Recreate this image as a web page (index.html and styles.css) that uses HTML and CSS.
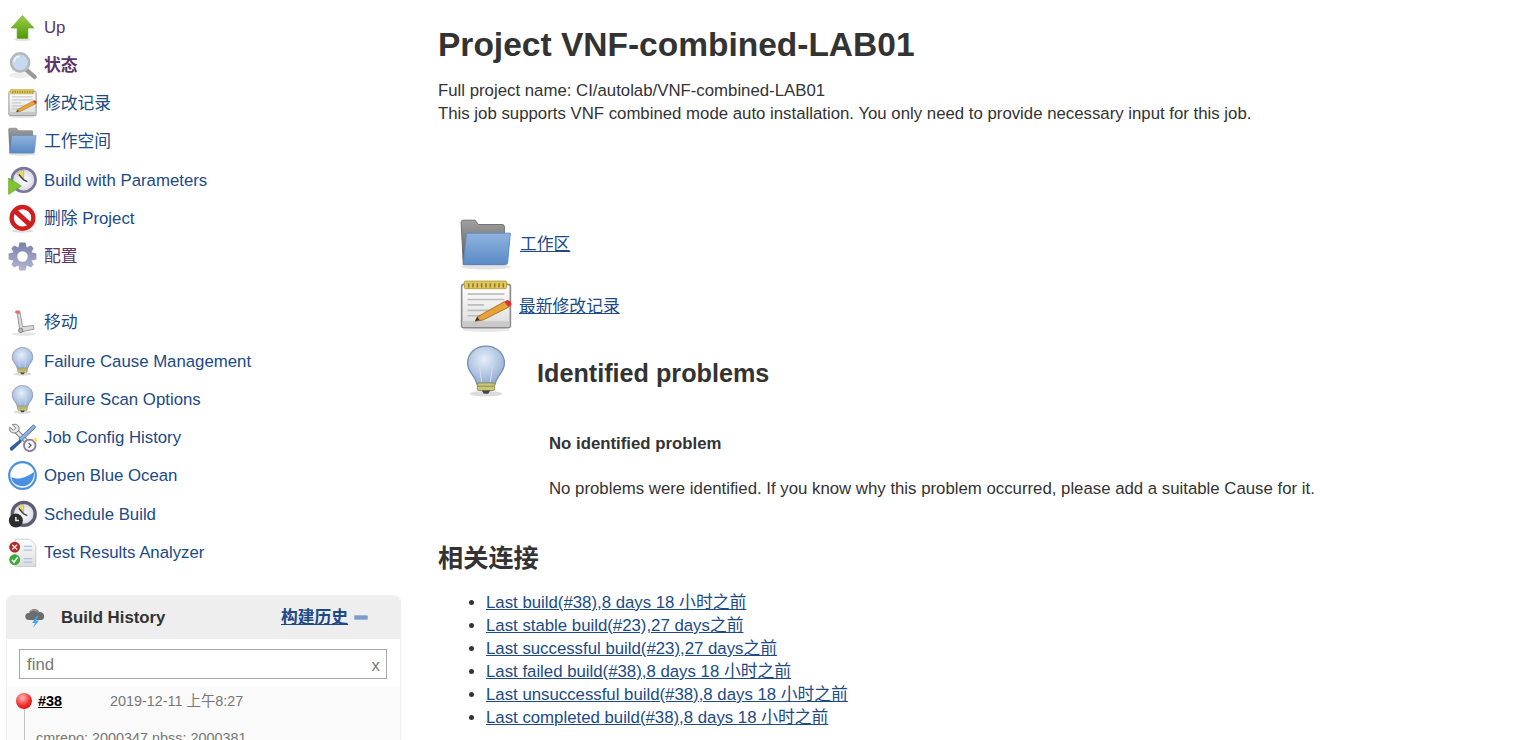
FILE: index.html
```html
<!DOCTYPE html>
<html lang="zh-CN">
<head>
  <meta charset="UTF-8">
  <meta name="viewport" content="width=device-width, initial-scale=1.0">
  <title>VNF-combined-LAB01</title>
  <link rel="stylesheet" href="styles.css">
</head>
<body>
  <svg class="defs" width="0" height="0">
    <defs>
      <linearGradient id="gFolder" x1="0" y1="0" x2="0" y2="1"><stop offset="0" stop-color="#8fb3de"/><stop offset="1" stop-color="#5a8ac6"/></linearGradient>
      <linearGradient id="gTab" x1="0" y1="0" x2="0" y2="1"><stop offset="0" stop-color="#a0a0a0"/><stop offset="1" stop-color="#555"/></linearGradient>
      <linearGradient id="gArrow" x1="0" y1="0" x2="0" y2="1"><stop offset="0" stop-color="#9ad04a"/><stop offset="1" stop-color="#4e9a06"/></linearGradient>
      <linearGradient id="gPaper" x1="0" y1="0" x2="0" y2="1"><stop offset="0" stop-color="#fff"/><stop offset="1" stop-color="#dcdcdc"/></linearGradient>
      <linearGradient id="gGear" x1="0" y1="0" x2="0" y2="1"><stop offset="0" stop-color="#7b80ab"/><stop offset="1" stop-color="#b3b6d3"/></linearGradient>
      <radialGradient id="gBulb" cx=".45" cy=".35" r=".7"><stop offset="0" stop-color="#e6eef8"/><stop offset="1" stop-color="#8aa9d4"/></radialGradient>
      <radialGradient id="gClock" cx=".5" cy=".5" r=".6"><stop offset="0" stop-color="#fff"/><stop offset="1" stop-color="#cfcfe0"/></radialGradient>

      <symbol id="i-up" viewBox="0 0 24 24">
        <ellipse cx="12" cy="22" rx="7" ry="1.300" fill="#e2e2e2"/>
        <path d="M12 2 L21.500 12.500 H16.500 V21 H7.500 V12.500 H2.500 Z" fill="url(#gArrow)" stroke="#6aa524" stroke-width=".5"/>
      </symbol>
      <symbol id="i-search" viewBox="0 0 24 24">
        <ellipse cx="10" cy="20" rx="9" ry="2.500" fill="#eee"/>
        <path d="M14.500 15 L22 21.500" stroke="#9a9a9a" stroke-width="3.600" stroke-linecap="round"/>
        <circle cx="10" cy="9.500" r="7.500" fill="#c5d9f1" stroke="#b8b8b8" stroke-width="2.200"/>
        <path d="M5 9 A5 5 0 0 1 9.500 4.500" fill="none" stroke="#eef5fd" stroke-width="1.400"/>
      </symbol>
      <symbol id="i-notepad" viewBox="0 0 48 48">
        <ellipse cx="24" cy="46" rx="22" ry="2" fill="#e8e8e8"/>
        <rect x="1.500" y="4" width="45" height="40" rx="2" fill="url(#gPaper)" stroke="#8a8a8a" stroke-width="1.500"/>
        <rect x="2.300" y="38" width="43.400" height="5.300" fill="#c9c9c9"/>
        <rect x="4" y="1" width="39" height="7" rx="1" fill="#e0c860" stroke="#b09a30" stroke-width=".8"/>
        <path d="M8 3v4M12 3v4M16 3v4M20 3v4M24 3v4M28 3v4M32 3v4M36 3v4M40 3v4" stroke="#8f7a20" stroke-width="1.400"/>
        <path d="M7 13H41M7 18H41M7 23H22M7 28H28M7 33H22" stroke="#bdbdbd" stroke-width="1.500"/>
        <path d="M16 34 L41 20 L45 25 L21 37 L14 38 Z" fill="#e8a33a" stroke="#a06a10" stroke-width=".8"/>
        <path d="M41 20 L45 25 L47.500 23 Q47.500 19 43.500 18.500 Z" fill="#e03030"/>
        <path d="M14 38 L16 34 L18 37 Z" fill="#333"/>
      </symbol>
      <symbol id="i-folder" viewBox="0 0 48 48">
        <ellipse cx="24" cy="45" rx="23" ry="2.500" fill="#e2e2e2"/>
        <path d="M1 4 Q1 2 3 2 H14 L17 6 H39 Q41 6 41 8 V43 H3 Z" fill="url(#gTab)" stroke="#666" stroke-width=".8"/>
        <path d="M6 14 H46.500 L44 41 Q44 43 42 43 H3 Z" fill="url(#gFolder)" stroke="#5b86bd" stroke-width=".8"/>
      </symbol>
      <symbol id="i-build" viewBox="0 0 24 24">
        <circle cx="13" cy="11.500" r="9.800" fill="url(#gClock)" stroke="#77779a" stroke-width="2.200"/>
        <path d="M13 11.500 L7 6 A8 8 0 0 1 13 3.500 Z" fill="#e8d870" stroke="#999" stroke-width=".5"/>
        <path d="M13 11.500 L9 7M13 11.500 L16 13" stroke="#444" stroke-width="1.200"/>
        <path d="M0.500 10 L11 16.500 L0.500 23.500 Z" fill="#7fc62e" stroke="#5c9a1a" stroke-width=".5"/>
      </symbol>
      <symbol id="i-stop" viewBox="0 0 24 24">
        <ellipse cx="12" cy="22.300" rx="9" ry="1.400" fill="#ddd"/>
        <circle cx="12" cy="11.500" r="9" fill="#fff" stroke="#d01f1f" stroke-width="3.600"/>
        <path d="M5.500 5.500 L18.500 17.500" stroke="#d01f1f" stroke-width="4"/>
      </symbol>
      <symbol id="i-gear" viewBox="0 0 24 24">
        <g fill="url(#gGear)">
          <path d="M9.500 .5 H14.500 L15.500 4.500 L18.800 2.800 L21.200 5.200 L19.500 8.500 L23.500 9.500 V14.500 L19.500 15.500 L21.200 18.800 L18.800 21.200 L15.500 19.500 L14.500 23.500 H9.500 L8.500 19.500 L5.200 21.200 L2.800 18.800 L4.500 15.500 L.5 14.500 V9.500 L4.500 8.500 L2.800 5.200 L5.200 2.800 L8.500 4.500 Z"/>
        </g>
        <circle cx="12" cy="12" r="4.300" fill="#fff"/>
      </symbol>
      <symbol id="i-move" viewBox="0 0 24 24">
        <ellipse cx="13" cy="21.500" rx="10" ry="1.500" fill="#e6e6e6"/>
        <path d="M7.500 3.500 L10 3.500 L12 15.500 L21 14.500 L21.500 17.500 L10 20 Z" fill="#dcdcdc" stroke="#8a8a8a" stroke-width=".7"/>
        <path d="M5.500 3.500 Q7 1 10 2.500 L9.500 5 L7 4.500 Z" fill="#d9716a"/>
        <circle cx="10.500" cy="18.500" r="1.800" fill="#bbb" stroke="#666" stroke-width=".6"/>
      </symbol>
      <symbol id="i-bulb" viewBox="0 0 48 48">
        <ellipse cx="24" cy="45" rx="15" ry="2.500" fill="#dcdcdc"/>
        <path d="M24 1 C34 1 41 8 41 17 C41 25 34 28 32.500 36 H15.500 C14 28 7 25 7 17 C7 8 14 1 24 1 Z" fill="url(#gBulb)" stroke="#7f8fab" stroke-width="1.200"/>
        <path d="M20 34 L18 20 M28 34 L30 20" stroke="#d8dbe0" stroke-width="1"/>
        <rect x="16" y="35" width="16" height="7" rx="1.500" fill="#c9c677" stroke="#85834a" stroke-width=".8"/>
        <path d="M16.500 38 H31.500" stroke="#85834a" stroke-width=".8"/>
        <path d="M20 42 H28 L26 45 H22 Z" fill="#444"/>
      </symbol>
      <symbol id="i-tools" viewBox="0 0 24 24">
        <path d="M6 6 L18 18" stroke="#777" stroke-width="4"/>
        <path d="M6 6 L18 18" stroke="#eee" stroke-width="2.400"/>
        <path d="M1.500 3.500 L4.500 6 L6.500 4 L3.500 1.500 C7 0 10 2.500 9 6 L7 8 C3.500 9 .5 7 1.500 3.500 Z" fill="#e8e8e8" stroke="#777" stroke-width=".8"/>
        <path d="M21 1.500 L23 3.500 L11 15 L9 13 Z" fill="#8fb3de" stroke="#3d6aa3" stroke-width=".7"/>
        <path d="M10 13.500 L2 20 Q.5 22.500 3.500 23 L11.500 15.500 Z" fill="#2f5f9e"/>
        <circle cx="18" cy="18.500" r="4.800" fill="#f5f5fa" stroke="#8a7a9e" stroke-width="1.500"/>
        <path d="M17 16.500 L19 18.500 L17 20.500" fill="none" stroke="#555" stroke-width="1"/>
        <circle cx="22.500" cy="14" r="1.500" fill="#f3e65a"/>
      </symbol>
      <symbol id="i-ocean" viewBox="0 0 24 24">
        <circle cx="12" cy="12" r="11" fill="#fff" stroke="#4a90e2" stroke-width="1.800"/>
        <path d="M2.500 13.500 C7 15.500 14 14.500 21.500 9 C22 15.500 18 20.800 12 20.800 C7 20.800 3.500 18 2.500 13.500 Z" fill="#4a90e2"/>
      </symbol>
      <symbol id="i-schedule" viewBox="0 0 24 24">
        <circle cx="13" cy="11.500" r="9.500" fill="url(#gClock)" stroke="#5d5c72" stroke-width="2.800"/>
        <path d="M13 11.500 L8 5 A8 8 0 0 1 13 3.500 Z" fill="#e8d870" stroke="#999" stroke-width=".5"/>
        <path d="M13 11.500 L9 7M13 11.500 L16 13" stroke="#444" stroke-width="1.200"/>
        <circle cx="6.500" cy="17" r="5.800" fill="#2e2e2e"/>
        <path d="M6.500 14 V17 H9" fill="none" stroke="#eee" stroke-width="1.200"/>
      </symbol>
      <symbol id="i-results" viewBox="0 0 24 24">
        <path d="M6 1 H18 L23 6 V23.500 H6 Z" fill="url(#gPaper)" stroke="#ccc" stroke-width=".8"/>
        <path d="M13 7 H20M13 10 H20M13 17 H20M13 20 H20" stroke="#a9c4e4" stroke-width="1"/>
        <circle cx="5.500" cy="7.500" r="4.500" fill="#b02a2a"/>
        <path d="M3.500 5.500 L7.500 9.500M7.500 5.500 L3.500 9.500" stroke="#f3dede" stroke-width="1.200"/>
        <circle cx="5.500" cy="18" r="4.500" fill="#3ea83a"/>
        <path d="M3.300 18 L5 20 L8 15.800" fill="none" stroke="#fff" stroke-width="1.300"/>
      </symbol>
      <symbol id="i-storm" viewBox="0 0 24 24">
        <path d="M6 15 C1 15 1 8 6 8 C7 3 15 3 16 7 C22 6 23 15 18 15 Z" fill="#6d6d6d"/>
        <path d="M6 8 C7 4.500 14 4 15 7.500" fill="none" stroke="#aaa" stroke-width="1"/>
        <path d="M14 11 L9 18 H12 L10 23 L16 15.500 H13 L15.500 11 Z" fill="#3fa9f5"/>
      </symbol>
    </defs>
  </svg>

  <div class="page">
    <aside class="side">
      <nav class="tasks">
        <a class="task seen" href="#up"><svg class="task-icon"><use href="#i-up"/></svg>Up</a>
        <a class="task seen current" href="#status"><svg class="task-icon"><use href="#i-search"/></svg>状态</a>
        <a class="task" href="#changes"><svg class="task-icon"><use href="#i-notepad"/></svg>修改记录</a>
        <a class="task" href="#ws"><svg class="task-icon"><use href="#i-folder"/></svg>工作空间</a>
        <a class="task" href="#build"><svg class="task-icon"><use href="#i-build"/></svg>Build with Parameters</a>
        <a class="task" href="#delete"><svg class="task-icon"><use href="#i-stop"/></svg>删除 Project</a>
        <a class="task seen" href="#config"><svg class="task-icon"><use href="#i-gear"/></svg>配置</a>
      </nav>
      <nav class="tasks tasks-more">
        <a class="task" href="#move"><svg class="task-icon"><use href="#i-move"/></svg>移动</a>
        <a class="task" href="#fcm"><svg class="task-icon"><use href="#i-bulb"/></svg>Failure Cause Management</a>
        <a class="task" href="#fso"><svg class="task-icon"><use href="#i-bulb"/></svg>Failure Scan Options</a>
        <a class="task" href="#jch"><svg class="task-icon"><use href="#i-tools"/></svg>Job Config History</a>
        <a class="task" href="#ocean"><svg class="task-icon"><use href="#i-ocean"/></svg>Open Blue Ocean</a>
        <a class="task" href="#sched"><svg class="task-icon"><use href="#i-schedule"/></svg>Schedule Build</a>
        <a class="task" href="#tra"><svg class="task-icon"><use href="#i-results"/></svg>Test Results Analyzer</a>
      </nav>

      <section class="history">
        <div class="history-head">
          <svg class="storm"><use href="#i-storm"/></svg>
          <span class="history-title">Build History</span>
          <a class="history-link" href="#trend">构建历史</a>
          <span class="collapse"></span>
        </div>
        <div class="history-search">
          <div class="find"><span>find</span><span class="find-x">x</span></div>
        </div>
        <div class="build-row">
          <div class="build-line">
            <span class="ball"></span>
            <a class="build-no" href="#38">#38</a>
            <span class="build-date">2019-12-11 上午8:27</span>
          </div>
          <div class="build-desc">cmrepo: 2000347 nbss: 2000381</div>
        </div>
      </section>
    </aside>

    <main class="main">
      <h1>Project VNF-combined-LAB01</h1>
      <p class="intro">Full project name: CI/autolab/VNF-combined-LAB01<br>This job supports VNF combined mode auto installation. You only need to provide necessary input for this job.</p>

      <div class="perma">
        <svg class="big-icon"><use href="#i-folder"/></svg>
        <a href="#ws">工作区</a>
      </div>
      <div class="perma perma-notes">
        <svg class="big-icon"><use href="#i-notepad"/></svg>
        <a href="#changes">最新修改记录</a>
      </div>

      <div class="problems-head">
        <svg class="big-icon"><use href="#i-bulb"/></svg>
        <h2>Identified problems</h2>
      </div>
      <div class="problems">
        <p class="problems-none">No identified problem</p>
        <p>No problems were identified. If you know why this problem occurred, please add a suitable Cause for it.</p>
      </div>

      <h2 class="links-title">相关连接</h2>
      <ul class="links">
        <li><a href="#b38">Last build(#38),8 days 18 小时之前</a></li>
        <li><a href="#b23">Last stable build(#23),27 days之前</a></li>
        <li><a href="#b23">Last successful build(#23),27 days之前</a></li>
        <li><a href="#b38">Last failed build(#38),8 days 18 小时之前</a></li>
        <li><a href="#b38">Last unsuccessful build(#38),8 days 18 小时之前</a></li>
        <li><a href="#b38">Last completed build(#38),8 days 18 小时之前</a></li>
      </ul>
    </main>
  </div>
</body>
</html>
```

FILE: styles.css
```css
html, body {
  margin: 0;
  height: 740px;
  overflow: hidden;
  background: #fff;
}
body {
  font-family: "Liberation Sans", "Noto Sans CJK SC", Arial, sans-serif;
  font-size: 16.8px;
  line-height: 23px;
  color: #333;
}
a { color: #204a87; }
.defs { position: absolute; }

.page { display: flex; }

/* side panel */
.side {
  width: 401px;
  flex: none;
  padding: 8px 0 0 6px;
  box-sizing: border-box;
}
.tasks-more { margin-top: 28px; }
.task {
  display: flex;
  align-items: center;
  height: 38.25px;
  gap: 7px;
  padding-left: 2px;
  text-decoration: none;
  white-space: nowrap;
}
.task.seen { color: #5c3566; }
.task.current { font-weight: bold; }
.task-icon {
  width: 29px;
  height: 29px;
  flex: none;
}

.history {
  margin-top: 23px;
  border: 1px solid #f0f0f0;
  border-radius: 6px 6px 0 0;
}
.history-head {
  display: flex;
  align-items: center;
  height: 43px;
  background: #eee;
  border-radius: 6px 6px 0 0;
  padding-left: 16px;
  font-weight: bold;
}
.storm { width: 24px; height: 24px; margin-right: 14px; }
.history-title { width: 220px; }
.history-link { text-decoration: underline; }
.collapse {
  width: 14px;
  height: 5px;
  margin-left: 6px;
  background: #7a9cc9;
  border: 1px solid #9db6d8;
  box-sizing: border-box;
  border-radius: 1px;
}
.history-search { padding: 10px 13px 8px 12px; }
.find {
  display: flex;
  justify-content: space-between;
  align-items: center;
  height: 30px;
  box-sizing: border-box;
  border: 1px solid #a9a9a9;
  padding: 1px 6px 0 7px;
  color: #777;
}
.find-x { padding-top: 3px; }
.build-row {
  background: #fafafa;
  padding: 3px 0 0 9px;
  height: 60px;
  font-size: 14.4px;
  color: #777;
  position: relative;
}
.build-line {
  display: flex;
  align-items: center;
  height: 23px;
}
.ball {
  width: 16px;
  height: 16px;
  border-radius: 50%;
  background: radial-gradient(circle at 40% 30%, #ffb9b9, #ef2929 55%, #b81414);
  flex: none;
}
.build-row::before {
  content: "";
  position: absolute;
  left: 17px;
  top: 22px;
  bottom: 0;
  width: 1px;
  background: #c4c4c4;
}
.build-no {
  margin-left: 6px;
  width: 72px;
  font-weight: bold;
  color: #000;
}
.build-desc { margin: 14px 0 0 20px; white-space: nowrap; }

/* main column */
.main {
  flex: 1;
  padding: 22px 0 0 37px;
}
h1 {
  margin: 0;
  font-size: 33.5px;
  line-height: 46px;
  font-weight: bold;
}
.intro { margin: 11px 0 0; }
.perma {
  display: flex;
  align-items: center;
  margin: 94px 0 0 22px;
  height: 50px;
  gap: 8px;
}
.perma-notes { margin-top: 9px; height: 56px; gap: 7px; }
.big-icon { width: 52px; height: 52px; flex: none; }
.perma-notes .big-icon { height: 54px; }
.problems-head {
  display: flex;
  align-items: center;
  height: 56px;
  margin: 11px 0 0 22px;
}
.problems-head .big-icon { height: 56px; margin-bottom: 5px; }
.problems-head h2 { margin: 0 0 0 25px; }
h2 {
  font-size: 25.2px;
  line-height: 30px;
  font-weight: bold;
}
.problems { padding-left: 111px; }
.problems p { margin: 0; }
.problems .problems-none { padding-top: 31px; margin-bottom: 22px; font-weight: bold; }
.links-title { margin: 43px 0 0; }
.links {
  margin: 18px 0 0;
  padding-left: 48px;
}
```
